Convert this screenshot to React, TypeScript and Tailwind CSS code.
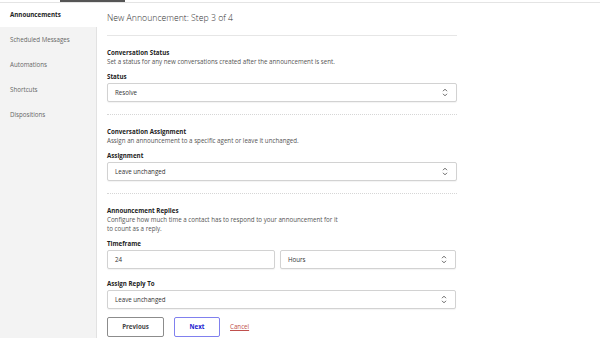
import React from "react";

const Chevron = () => (
  <svg width="6" height="9" viewBox="0 0 6 9" className="shrink-0">
    <path d="M1 3.2 L3 1.2 L5 3.2" fill="none" stroke="#555" strokeWidth="0.9" />
    <path d="M1 5.8 L3 7.8 L5 5.8" fill="none" stroke="#555" strokeWidth="0.9" />
  </svg>
);

const Select = ({ value, className = "" }: { value: string; className?: string }) => (
  <div
    className={`h-[19px] flex items-center justify-between pl-[7px] pr-[8px] border border-[#d2d2d2] rounded-[2px] bg-white shadow-[0_1px_1px_rgba(0,0,0,0.05)] text-[6.2px] text-[#333] ${className}`}
  >
    <span>{value}</span>
    <Chevron />
  </div>
);

const Input = ({ value, className = "" }: { value: string; className?: string }) => (
  <div
    className={`h-[19px] flex items-center pl-[7px] border border-[#d2d2d2] rounded-[2px] bg-white shadow-[0_1px_1px_rgba(0,0,0,0.05)] text-[6.2px] text-[#333] ${className}`}
  >
    {value}
  </div>
);

export default function App() {
  const items = ["Scheduled Messages", "Automations", "Shortcuts", "Dispositions"];
  return (
    <div
      className="w-[600px] h-[338px] bg-white overflow-hidden flex flex-col"
      style={{ fontFamily: '"Open Sans", "Noto Sans", sans-serif' }}
    >
      <div className="h-[3px] shrink-0 border-b border-[#e4e4e4]">
        <div className="ml-[60px] w-[65px] h-[2px] bg-[#555]" />
      </div>
      <div className="flex flex-1 min-h-0">
        <div className="w-[97px] shrink-0 bg-[#f3f3f3] border-r border-[#e2e2e2] flex flex-col">
          <div className="h-[24px] bg-white flex items-center pl-[10px] text-[6.2px] font-bold text-[#222] mr-[-1px]">
            Announcements
          </div>
          {items.map((t) => (
            <div key={t} className="h-[25px] flex items-center pl-[10px] text-[6.2px] text-[#666]">
              {t}
            </div>
          ))}
        </div>
        <div className="pl-[10px] w-[360px] flex flex-col text-[#333]">
          <div className="h-[33px] shrink-0 flex items-center border-b border-[#e6e6e6] text-[8.7px] font-light text-[#333]">
            New Announcement: Step 3 of 4
          </div>

          <div className="mt-[12px] text-[6.2px] leading-[9px] font-bold text-[#222]">Conversation Status</div>
          <div className="text-[6.2px] leading-[9px] text-[#555]">
            Set a status for any new conversations created after the announcement is sent.
          </div>
          <div className="mt-[6px] text-[6.2px] leading-[9px] font-bold text-[#222]">Status</div>
          <Select value="Resolve" className="mt-[2px]" />
          <div className="mt-[12px] border-t border-dotted border-[#d6d6d6]" />

          <div className="mt-[12px] text-[6.2px] leading-[9px] font-bold text-[#222]">Conversation Assignment</div>
          <div className="text-[6.2px] leading-[9px] text-[#555]">
            Assign an announcement to a specific agent or leave it unchanged.
          </div>
          <div className="mt-[6px] text-[6.2px] leading-[9px] font-bold text-[#222]">Assignment</div>
          <Select value="Leave unchanged" className="mt-[2px]" />
          <div className="mt-[12px] border-t border-dotted border-[#d6d6d6]" />

          <div className="mt-[12px] text-[6.2px] leading-[9px] font-bold text-[#222]">Announcement Replies</div>
          <div className="text-[6.2px] leading-[9px] text-[#555]">
            Configure how much time a contact has to respond to your announcement for it
            <br />
            to count as a reply.
          </div>
          <div className="mt-[6px] text-[6.2px] leading-[9px] font-bold text-[#222]">Timeframe</div>
          <div className="mt-[2px] flex gap-[5px] w-[349px]">
            <Input value="24" className="flex-1" />
            <Select value="Hours" className="flex-1" />
          </div>
          <div className="mt-[10px] text-[6.2px] leading-[9px] font-bold text-[#222]">Assign Reply To</div>
          <Select value="Leave unchanged" className="mt-[2px] w-[349px]" />

          <div className="mt-[8px] flex items-center">
            <div className="w-[57px] h-[20px] flex items-center justify-center border border-[#8c8c8c] rounded-[2px] text-[6.2px] font-bold text-[#444]">
              Previous
            </div>
            <div className="ml-[10px] w-[46px] h-[20px] flex items-center justify-center border border-[#8080ee] rounded-[2px] text-[6.2px] font-bold text-[#1a1ad0]">
              Next
            </div>
            <div className="ml-[10px] text-[6.2px] text-[#c0504d] underline">Cancel</div>
          </div>
        </div>
      </div>
    </div>
  );
}
